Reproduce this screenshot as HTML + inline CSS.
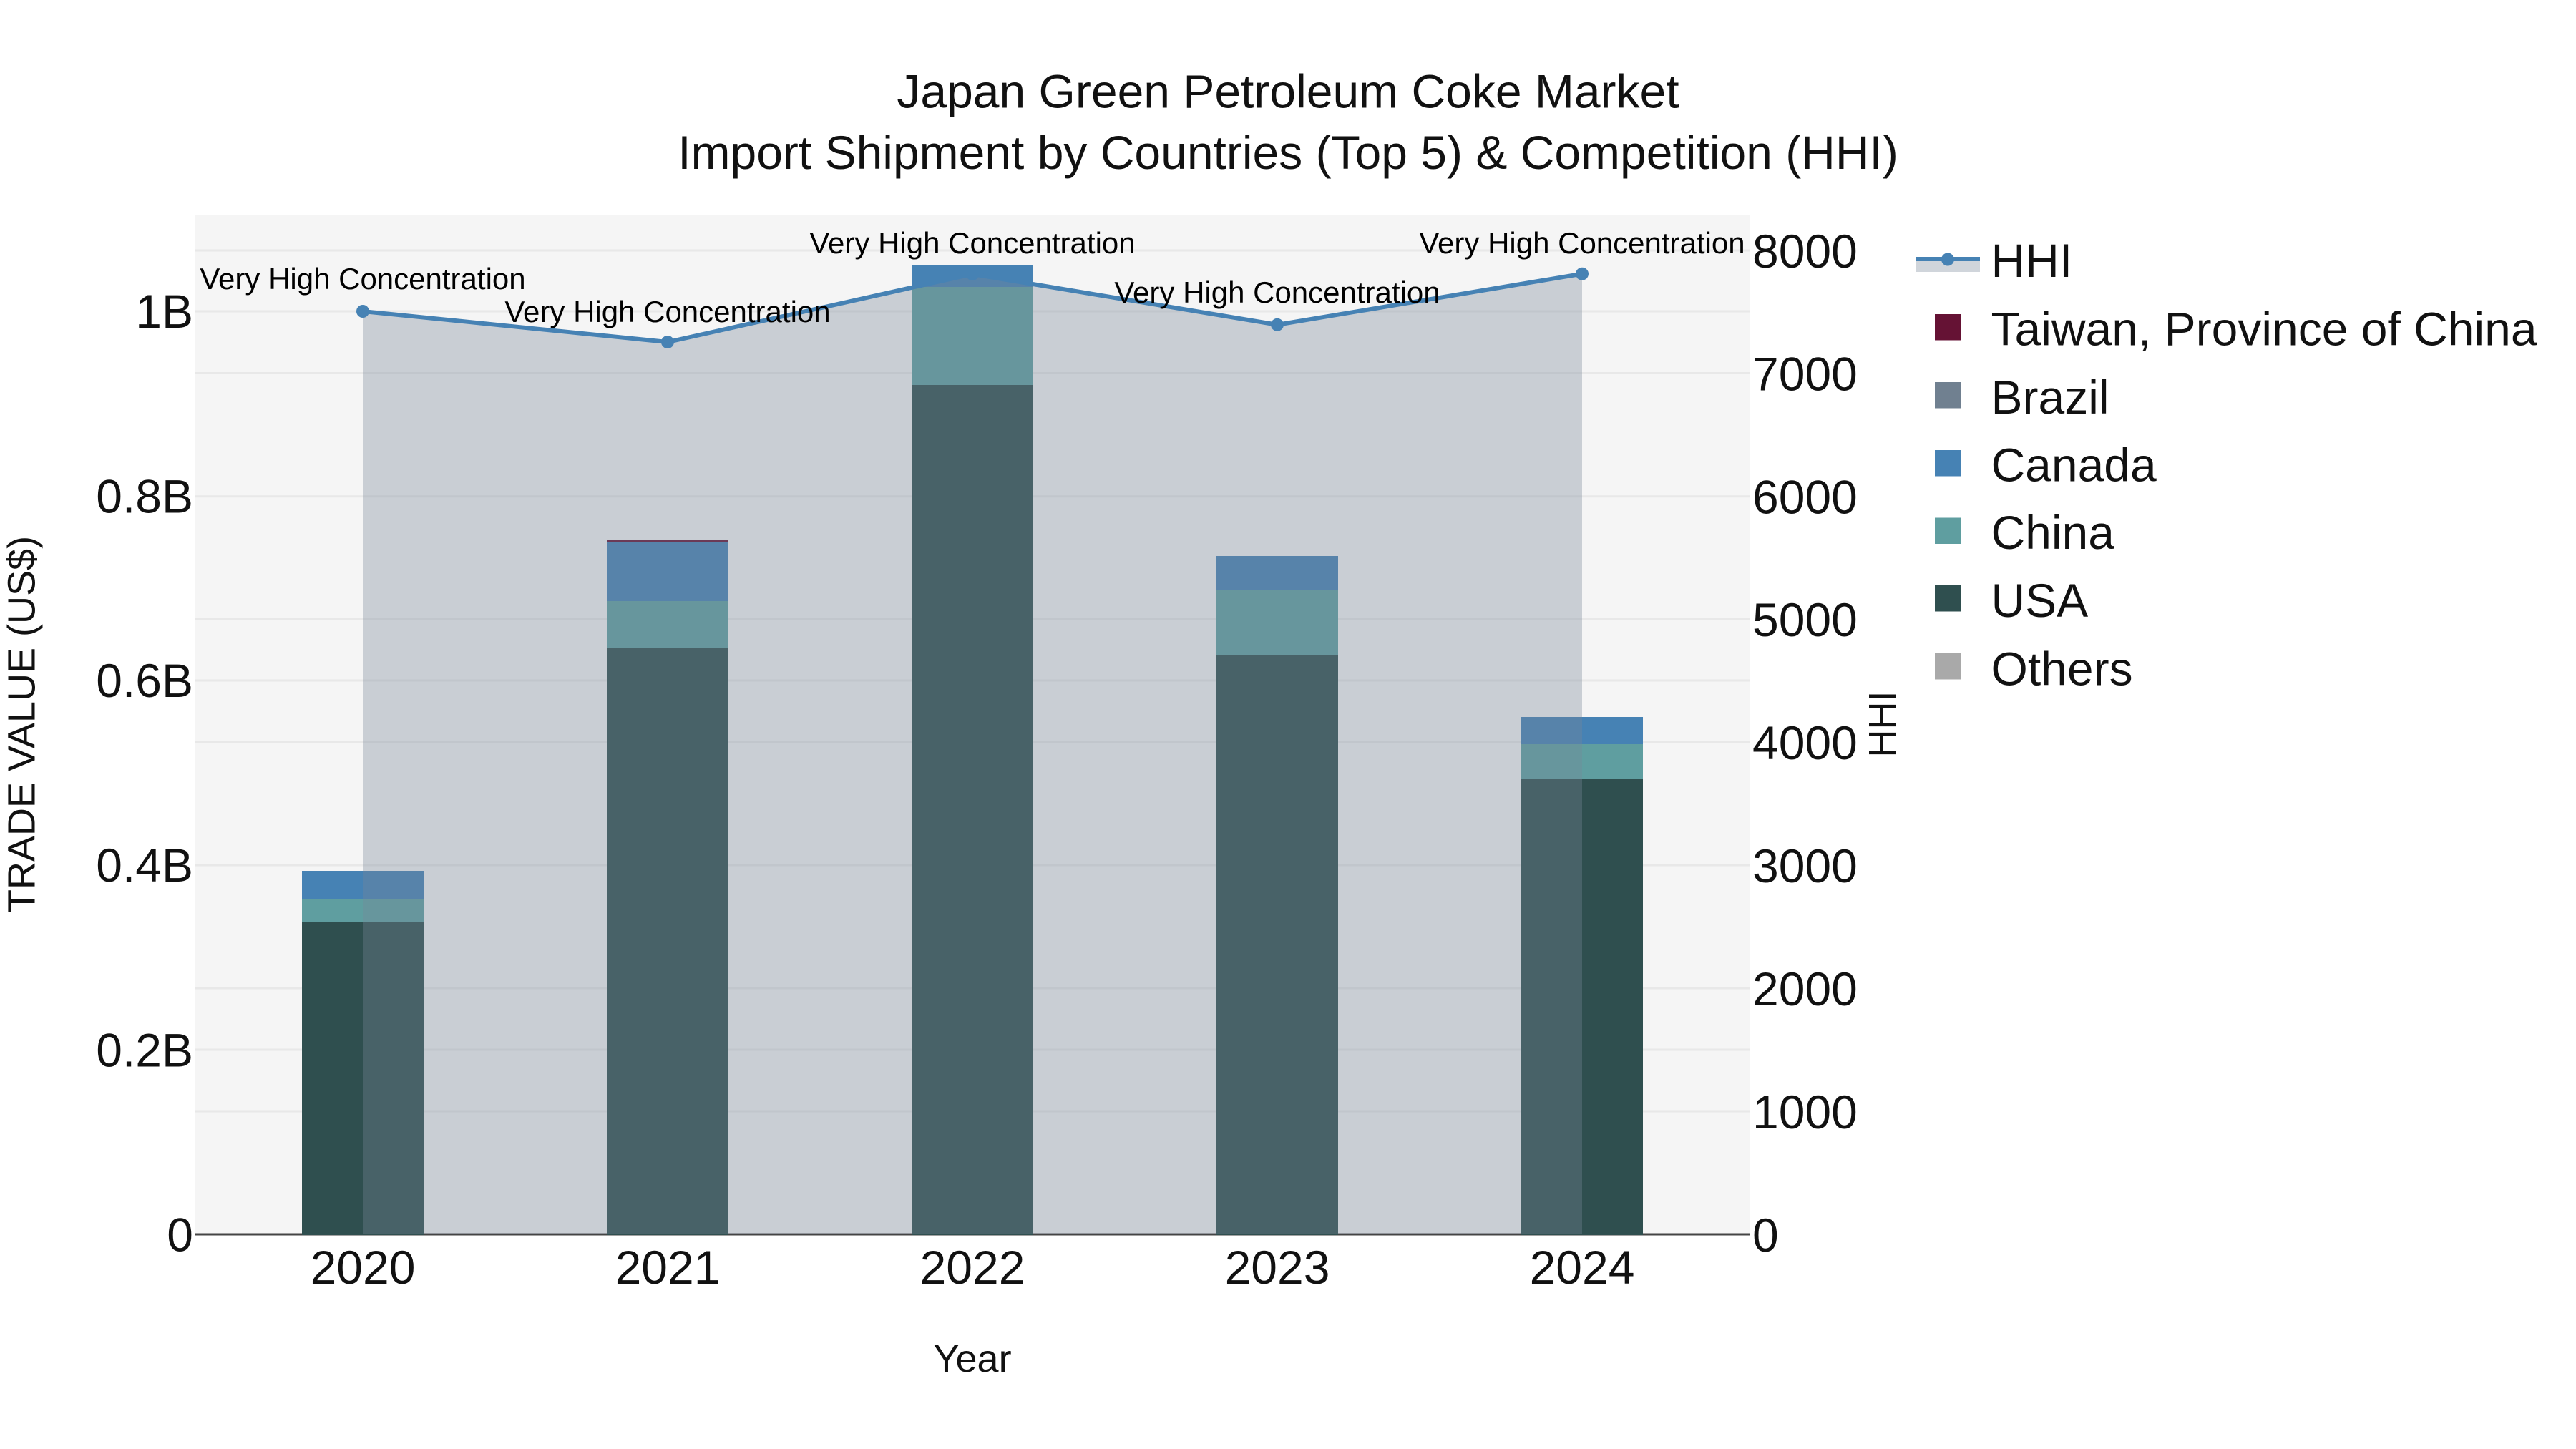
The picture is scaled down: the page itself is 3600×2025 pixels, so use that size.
<!DOCTYPE html>
<html>
<head>
<meta charset="utf-8">
<title>Japan Green Petroleum Coke Market</title>
<style>
html,body{margin:0;padding:0;background:#fff;width:3600px;height:2025px;overflow:hidden}
svg{display:block}
text{font-family:"Liberation Sans",sans-serif;fill:#111}
.t{font-size:66px}
.l{font-size:66px}
.a{font-size:42px;fill:#000;text-anchor:middle}
</style>
</head>
<body>
<svg width="3600" height="2025" viewBox="0 0 3600 2025" xmlns="http://www.w3.org/2000/svg">
<rect width="3600" height="2025" fill="#fff"/>
<rect x="273" y="300" width="2172" height="1425" fill="#f5f5f5"/>
<g stroke="#e8e8e8" stroke-width="3" fill="none">
<path d="M273 350H2445M273 435H2445M273 521.5H2445M273 693.7H2445M273 865.5H2445M273 951H2445M273 1037H2445M273 1209H2445M273 1381H2445M273 1467H2445M273 1553H2445"/>
</g>
<path d="M273 1725H2445" stroke="#444" stroke-width="3"/>

<!-- bars -->
<g shape-rendering="crispEdges">
<rect x="422" y="1288" width="170" height="438" fill="#2f4f4f"/>
<rect x="422" y="1256" width="170" height="32" fill="#5f9ea0"/>
<rect x="422" y="1217" width="170" height="39" fill="#4682b4"/>

<rect x="848" y="905" width="170" height="821" fill="#2f4f4f"/>
<rect x="848" y="840" width="170" height="65" fill="#5f9ea0"/>
<rect x="848" y="757" width="170" height="83" fill="#4682b4"/>
<rect x="848" y="755" width="170" height="2" fill="#651234"/>

<rect x="1274" y="538" width="170" height="1188" fill="#2f4f4f"/>
<rect x="1274" y="401" width="170" height="137" fill="#5f9ea0"/>
<rect x="1274" y="371" width="170" height="30" fill="#4682b4"/>

<rect x="1700" y="916" width="170" height="810" fill="#2f4f4f"/>
<rect x="1700" y="824" width="170" height="92" fill="#5f9ea0"/>
<rect x="1700" y="777" width="170" height="47" fill="#4682b4"/>

<rect x="2126" y="1088" width="170" height="638" fill="#2f4f4f"/>
<rect x="2126" y="1040" width="170" height="48" fill="#5f9ea0"/>
<rect x="2126" y="1002" width="170" height="38" fill="#4682b4"/>
</g>

<!-- HHI -->
<polygon points="507,435 933,478 1359,383 1785,453.8 2211,382.7 2211,1725 507,1725" fill="#778899" fill-opacity="0.35"/>
<polyline points="507,435 933,478 1359,383 1785,453.8 2211,382.7" fill="none" stroke="#4682b4" stroke-width="6"/>
<g fill="#4682b4">
<circle cx="507" cy="435" r="9"/>
<circle cx="933" cy="478" r="9"/>
<circle cx="1359" cy="383" r="9"/>
<circle cx="1785" cy="453.8" r="9"/>
<circle cx="2211" cy="382.7" r="9"/>
</g>

<!-- annotations -->
<text class="a" x="507" y="404">Very High Concentration</text>
<text class="a" x="933" y="450">Very High Concentration</text>
<text class="a" x="1359" y="354">Very High Concentration</text>
<text class="a" x="1785" y="423">Very High Concentration</text>
<text class="a" x="2211" y="354">Very High Concentration</text>

<!-- title -->
<text x="1800" y="150.5" font-size="66" text-anchor="middle">Japan Green Petroleum Coke Market</text>
<text x="1800" y="236" font-size="66" text-anchor="middle">Import Shipment by Countries (Top 5) &amp; Competition (HHI)</text>

<!-- left ticks -->
<g class="t" text-anchor="end">
<text x="270" y="1748.5">0</text>
<text x="270" y="1490.5">0.2B</text>
<text x="270" y="1232">0.4B</text>
<text x="270" y="974">0.6B</text>
<text x="270" y="716.5">0.8B</text>
<text x="270" y="458">1B</text>
</g>

<!-- right ticks -->
<g class="t">
<text x="2449" y="1749">0</text>
<text x="2449" y="1577">1000</text>
<text x="2449" y="1405">2000</text>
<text x="2449" y="1233">3000</text>
<text x="2449" y="1061">4000</text>
<text x="2449" y="889">5000</text>
<text x="2449" y="717.5">6000</text>
<text x="2449" y="545.5">7000</text>
<text x="2449" y="374">8000</text>
</g>

<!-- x ticks -->
<g class="t" text-anchor="middle">
<text x="507" y="1794">2020</text>
<text x="933" y="1794">2021</text>
<text x="1359" y="1794">2022</text>
<text x="1785" y="1794">2023</text>
<text x="2211" y="1794">2024</text>
</g>

<!-- axis titles -->
<text x="1359" y="1917" font-size="54" text-anchor="middle">Year</text>
<text transform="translate(48.5 1012.5) rotate(-90)" font-size="54" text-anchor="middle">TRADE VALUE (US$)</text>
<text transform="translate(2649 1012) rotate(-90)" font-size="54" text-anchor="middle">HHI</text>

<!-- legend -->
<rect x="2677" y="362" width="90" height="18" fill="#778899" fill-opacity="0.35"/>
<path d="M2677 362H2767" stroke="#4682b4" stroke-width="6"/>
<circle cx="2722" cy="362.5" r="9" fill="#4682b4"/>
<g shape-rendering="crispEdges">
<rect x="2704" y="439" width="36.5" height="36.5" fill="#651234"/>
<rect x="2704" y="534" width="36.5" height="36.5" fill="#708090"/>
<rect x="2704" y="629" width="36.5" height="36.5" fill="#4682b4"/>
<rect x="2704" y="723.5" width="36.5" height="36.5" fill="#5f9ea0"/>
<rect x="2704" y="818" width="36.5" height="36.5" fill="#2f4f4f"/>
<rect x="2704" y="913" width="36.5" height="36.5" fill="#a9a9a9"/>
</g>
<g class="l">
<text x="2782.5" y="387">HHI</text>
<text x="2782.5" y="482.5">Taiwan, Province of China</text>
<text x="2782.5" y="578">Brazil</text>
<text x="2782.5" y="672.5">Canada</text>
<text x="2782.5" y="767">China</text>
<text x="2782.5" y="862">USA</text>
<text x="2782.5" y="957.5">Others</text>
</g>
</svg>
</body>
</html>
